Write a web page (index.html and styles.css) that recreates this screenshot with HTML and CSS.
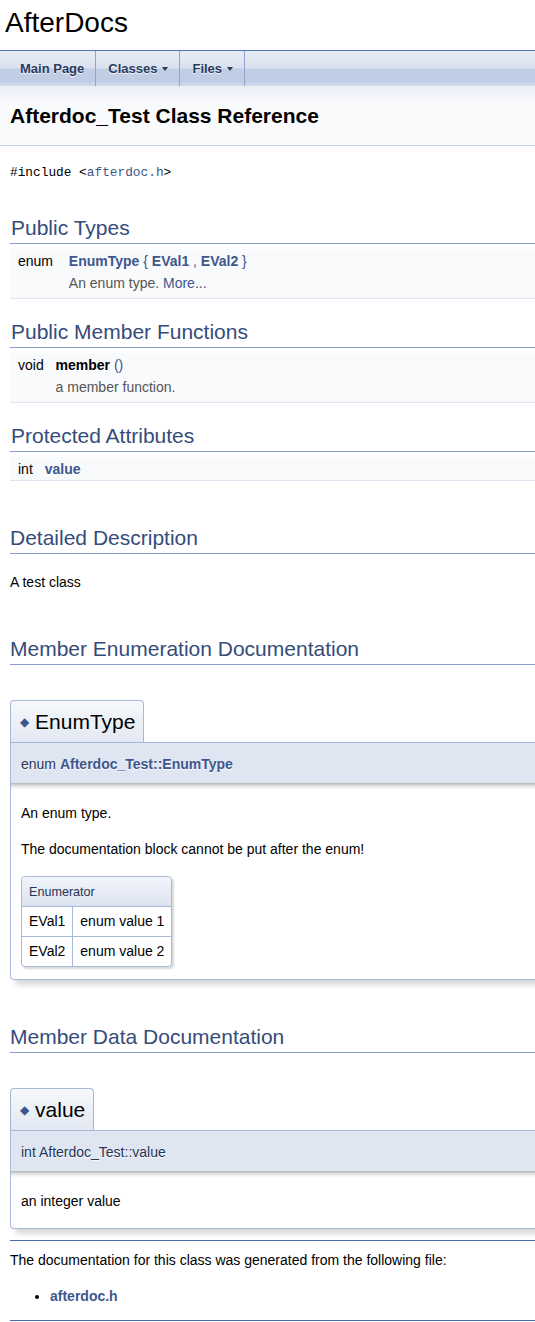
FILE: index.html
```html
<!DOCTYPE html>
<html lang="en">
<head>
<meta charset="utf-8">
<title>AfterDocs: Afterdoc_Test Class Reference</title>
<link rel="stylesheet" href="styles.css">
</head>
<body>
<div class="titlearea"><div class="projectname">AfterDocs</div></div>
<nav class="navbar">
  <ul class="menu">
    <li><a href="#">Main Page</a></li>
    <li><a href="#">Classes<span class="caret"></span></a></li>
    <li><a href="#">Files<span class="caret"></span></a></li>
  </ul>
</nav>
<div class="header"><div class="title">Afterdoc_Test Class Reference</div></div>
<div class="contents">
  <div class="include"><code>#include &lt;<a href="#">afterdoc.h</a>&gt;</code></div>

  <section class="decls first">
    <h2 class="groupheader">Public Types</h2>
    <div class="memberdecls">
      <div class="item-left">enum &#160;</div>
      <div class="item-right"><a class="el" href="#">EnumType</a> { <a class="el" href="#">EVal1</a> , <a class="el" href="#">EVal2</a> }</div>
      <div class="desc-left"></div>
      <div class="desc-right">An enum type. <a class="more" href="#">More...</a></div>
      <div class="sep"></div>
    </div>
  </section>

  <section class="decls">
    <h2 class="groupheader">Public Member Functions</h2>
    <div class="memberdecls">
      <div class="item-left">void&#160;</div>
      <div class="item-right"><b class="self">member</b> ()</div>
      <div class="desc-left"></div>
      <div class="desc-right">a member function.</div>
      <div class="sep"></div>
    </div>
  </section>

  <section class="decls">
    <h2 class="groupheader">Protected Attributes</h2>
    <div class="memberdecls">
      <div class="item-left">int&#160;</div>
      <div class="item-right"><a class="el" href="#">value</a></div>
      <div class="sep"></div>
    </div>
  </section>

  <h2 class="groupheader doc">Detailed Description</h2>
  <p class="plain">A test class</p>

  <h2 class="groupheader doc">Member Enumeration Documentation</h2>
  <div class="memitem">
    <h2 class="memtitle"><span class="permalink">&#9670;</span>&#160;EnumType</h2>
    <div class="memproto">enum <a class="el" href="#">Afterdoc_Test::EnumType</a></div>
    <div class="memdoc">
      <p>An enum type.</p>
      <p>The documentation block cannot be put after the enum!</p>
      <table class="fieldtable">
        <tr><th colspan="2">Enumerator</th></tr>
        <tr><td class="fieldname">EVal1</td><td class="fielddoc">enum value 1</td></tr>
        <tr><td class="fieldname">EVal2</td><td class="fielddoc">enum value 2</td></tr>
      </table>
    </div>
  </div>

  <h2 class="groupheader doc">Member Data Documentation</h2>
  <div class="memitem">
    <h2 class="memtitle"><span class="permalink">&#9670;</span>&#160;value</h2>
    <div class="memproto">int Afterdoc_Test::value</div>
    <div class="memdoc">
      <p>an integer value</p>
    </div>
  </div>

  <hr class="rule">
  <div class="generated">The documentation for this class was generated from the following file:</div>
  <ul class="files">
    <li><a class="el" href="#">afterdoc.h</a></li>
  </ul>
  <hr class="footer">
</div>
</body>
</html>
```
FILE: styles.css
```css
html, body {
  margin: 0;
  padding: 0;
}
body {
  font-family: "Liberation Sans", Arial, sans-serif;
  font-size: 14px;
  line-height: 22px;
  color: #000;
  background: #fff;
}
a {
  color: #3D578C;
  text-decoration: none;
}

/* title */
.titlearea {
  height: 50px;
  border-bottom: 1px solid #5373B4;
}
.projectname {
  font-size: 28px;
  line-height: 32px;
  padding: 7px 0 0 5px;
}

/* navigation */
.navbar {
  height: 35px;
  background: linear-gradient(to bottom, #E7EBF4 0%, #DAE1EF 48%, #C1CEE5 52%, #BFCCE4 86%, #D5DDED 100%);
}
.menu {
  list-style: none;
  margin: 0;
  padding: 0 0 0 8px;
  display: flex;
  height: 100%;
}
.menu li {
  border-right: 1px solid #8FA4CF;
}
.menu a {
  display: flex;
  align-items: center;
  height: 35px;
  padding: 0 11px 0 12px;
  font-size: 13px;
  font-weight: bold;
  color: #283A5D;
  text-shadow: 0 1px 1px rgba(255,255,255,0.9);
}
.caret {
  display: inline-block;
  width: 0;
  height: 0;
  margin-left: 5px;
  margin-top: 1px;
  border-top: 4px solid #283A5D;
  border-left: 3px solid transparent;
  border-right: 3px solid transparent;
}

/* header */
.header {
  background: linear-gradient(to bottom, #EBEFF6 0, #F9FAFC 16px);
  background-color: #F9FAFC;
  border-bottom: 1px solid #C4CFE5;
  padding: 6px 5px 5px 10px;
}
.title {
  font-size: 21px;
  line-height: 28px;
  font-weight: bold;
  margin: 10px 0;
}

/* contents */
.contents {
  margin: 0 0 0 10px;
}
.include {
  margin-top: 14px;
}
.include code {
  font-family: "Liberation Mono", monospace;
  font-size: 12.8px;
}
.include a {
  color: #3D578C;
}

.groupheader {
  font-size: 21px;
  line-height: 22px;
  font-weight: normal;
  color: #354C7B;
  border-bottom: 1px solid #879ECB;
  padding: 8px 0 4px 0;
  margin: 0 0 5px 0;
}
.decls {
  margin-top: 14px;
}
.decls.first {
  margin-top: 25px;
}
.decls .groupheader {
  padding-left: 1px;
}

.memberdecls {
  display: grid;
  grid-template-columns: max-content 1fr;
}
.item-left, .item-right, .desc-left, .desc-right {
  background: #F9FAFC;
}
.item-left, .item-right {
  padding: 1px 0 0 8px;
}
.item-left {
  white-space: nowrap;
  text-align: right;
}
.item-right {
  color: #3D578C;
}
.desc-left, .desc-right {
  padding: 0 8px 4px 8px;
  color: #555;
}
a.el {
  font-weight: bold;
  color: #3D578C;
}
.self {
  color: #000;
}
a.more {
  color: #3D578C;
}
.sep {
  grid-column: 1 / -1;
  height: 0;
  border-bottom: 1px solid #DEE4F0;
}

.groupheader.doc {
  margin: 38px 0 17px 0;
}
.plain {
  margin: 0;
}
.groupheader.doc + .plain + .groupheader.doc {
  margin-top: 37px;
}

/* member documentation */
.memitem {
  display: flex;
  flex-direction: column;
  align-items: flex-start;
  margin: 35px 0 10px 0;
}
.memtitle {
  margin: 0 0 -1px 0;
  padding: 8px;
  font-size: 21px;
  line-height: 26px;
  font-weight: normal;
  color: #000;
  border: 1px solid #A8B8D9;
  border-bottom: none;
  border-radius: 4px 4px 0 0;
  background: linear-gradient(to bottom, #F6F8FB 0%, #E2E8F2 100%);
}
.permalink {
  display: inline-block;
  padding-left: 1px;
  font-family: "DejaVu Sans", sans-serif;
  font-size: 12px;
  color: #3D578C;
  vertical-align: 3px;
  line-height: 12px;
}
.memproto {
  align-self: stretch;
  border: 1px solid #A8B8D9;
  border-bottom: none;
  border-right: none;
  background: #DFE5F1;
  padding: 7px 0 5px 10px;
  line-height: 28px;
  color: #253555;
  text-shadow: 0 1px 1px rgba(255,255,255,0.9);
  box-shadow: 5px 5px 5px rgba(0,0,0,0.15);
}
.memdoc {
  align-self: stretch;
  border: 1px solid #A8B8D9;
  border-top: none;
  border-right: none;
  border-bottom-left-radius: 4px;
  padding: 5px 10px 2px 10px;
  background: linear-gradient(to bottom, #B4B4B4 0, #D6D6D6 2px, #EEEEEE 4px, #FFFFFF 7px);
  box-shadow: 5px 5px 5px rgba(0,0,0,0.15);
}
.memdoc p {
  margin: 14px 0;
}

.fieldtable {
  border: 1px solid #A8B8D9;
  border-spacing: 0;
  border-collapse: separate;
  border-radius: 4px;
  box-shadow: 2px 2px 2px rgba(0,0,0,0.15);
  margin: 16px 0 10px 0;
}
.fieldtable th {
  text-align: left;
  font-weight: normal;
  font-size: 12.6px;
  line-height: 20px;
  color: #253555;
  padding: 5px 7px 4px 7px;
  border-bottom: 1px solid #A8B8D9;
  border-radius: 4px 4px 0 0;
  background: linear-gradient(to bottom, #F2F5FA 0%, #DCE3F0 100%);
}
.fieldtable td {
  padding: 3px 7px 4px 7px;
  line-height: 22px;
  vertical-align: top;
  border-right: 1px solid #A8B8D9;
  border-bottom: 1px solid #A8B8D9;
  white-space: nowrap;
}
.fieldtable td:last-child {
  border-right: none;
}
.fieldtable tr:last-child td {
  border-bottom: none;
}

/* footer */
hr.rule {
  height: 0;
  border: none;
  border-top: 1px solid #4A6AAA;
  margin: 11px 0 8px 0;
}
.files {
  margin: 14px 0 13px 0;
  padding-left: 40px;
}
hr.footer {
  height: 0;
  border: none;
  border-top: 1px solid #4A6AAA;
  margin: 0;
}
```
